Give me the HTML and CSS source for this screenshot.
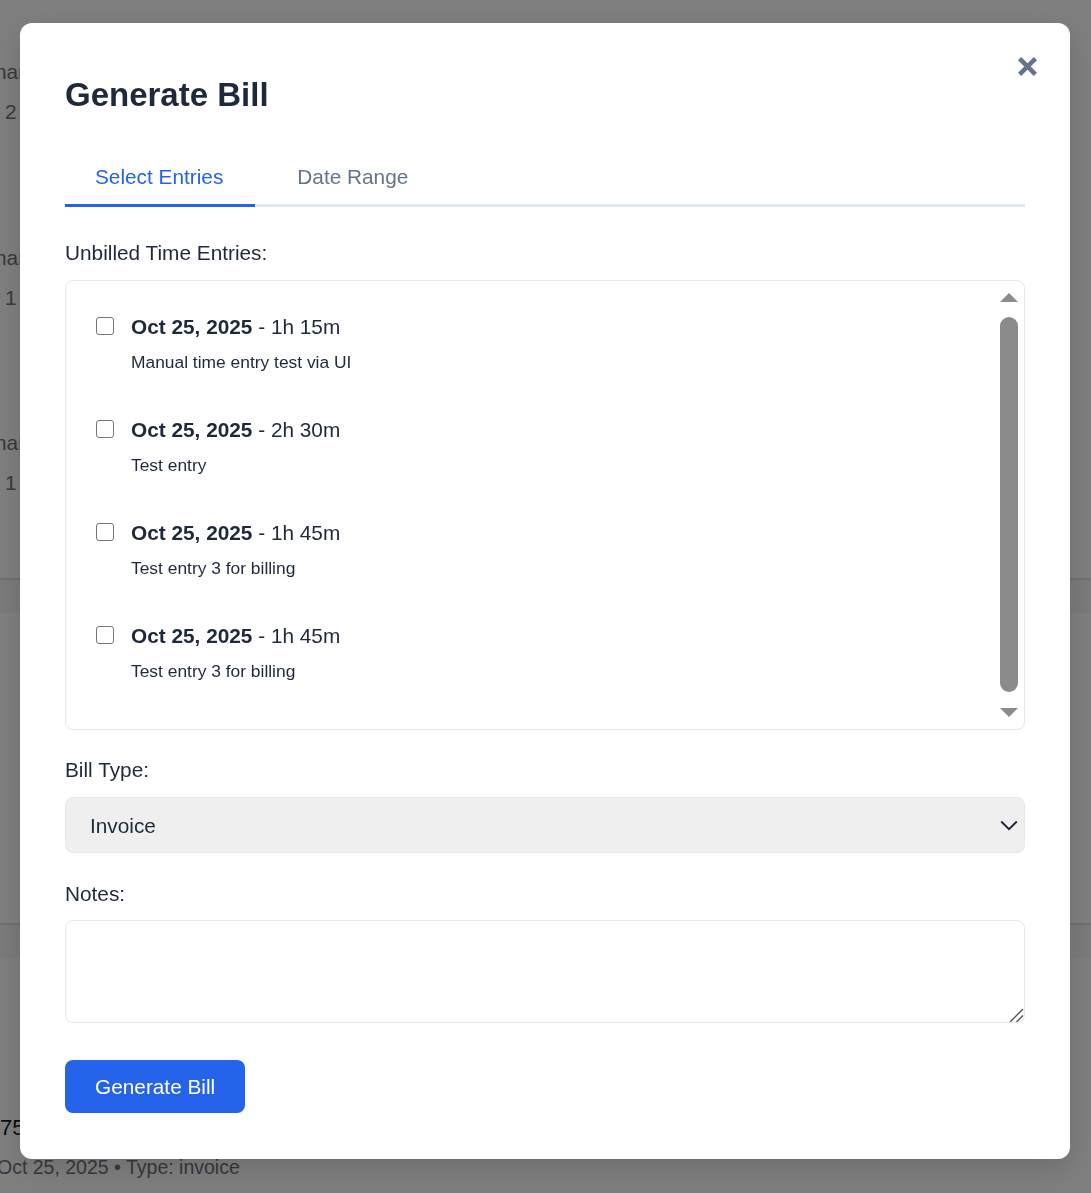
FILE: index.html
```html
<!DOCTYPE html>
<html lang="en">
<head>
<meta charset="utf-8">
<title>Generate Bill</title>
<link rel="stylesheet" href="styles.css">
</head>
<body>
<div class="page">
  <div class="bg-card"><div class="bg-label">nar</div><div class="bg-value">2</div></div>
  <div class="bg-card"><div class="bg-label">nar</div><div class="bg-value">1</div></div>
  <div class="bg-card bg-card-last"><div class="bg-label">nar</div><div class="bg-value">1</div></div>
  <div class="bg-band"></div>
  <div class="bg-gap"></div>
  <div class="bg-band"></div>
  <div class="bg-bill">
    <div class="bg-amount">75</div>
    <div class="bg-meta">Oct 25, 2025 • Type: invoice</div>
  </div>
</div>

<div class="overlay">
  <div class="modal">
    <button class="close" type="button" aria-label="Close">
      <svg width="21" height="21" viewBox="0 0 21 21"><path d="M2.6 2.6 L18.4 18.4 M18.4 2.6 L2.6 18.4" stroke="#64748b" stroke-width="4.5" fill="none"/></svg>
    </button>
    <h2 class="modal-title">Generate Bill</h2>
    <div class="tabs">
      <button class="tab active" type="button">Select Entries</button>
      <button class="tab" type="button">Date Range</button>
    </div>

    <div class="field field-entries">
      <div class="field-label">Unbilled Time Entries:</div>
      <div class="entries-box">
        <div class="entries-scroll">
          <div class="entries-list">
            <label class="entry">
              <input type="checkbox" class="entry-check">
              <span class="entry-text">
                <span class="entry-head"><strong>Oct 25, 2025</strong> - 1h 15m</span>
                <span class="entry-desc">Manual time entry test via UI</span>
              </span>
            </label>
            <label class="entry">
              <input type="checkbox" class="entry-check">
              <span class="entry-text">
                <span class="entry-head"><strong>Oct 25, 2025</strong> - 2h 30m</span>
                <span class="entry-desc">Test entry</span>
              </span>
            </label>
            <label class="entry">
              <input type="checkbox" class="entry-check">
              <span class="entry-text">
                <span class="entry-head"><strong>Oct 25, 2025</strong> - 1h 45m</span>
                <span class="entry-desc">Test entry 3 for billing</span>
              </span>
            </label>
            <label class="entry">
              <input type="checkbox" class="entry-check">
              <span class="entry-text">
                <span class="entry-head"><strong>Oct 25, 2025</strong> - 1h 45m</span>
                <span class="entry-desc">Test entry 3 for billing</span>
              </span>
            </label>
          </div>
        </div>
        <div class="scrollbar" aria-hidden="true">
          <div class="scroll-btn">
            <svg width="18" height="36" viewBox="0 0 18 36"><polygon points="9,12 18,21 0,21" fill="#8b8b8b"/></svg>
          </div>
          <div class="scroll-thumb"></div>
          <div class="scroll-btn">
            <svg width="18" height="36" viewBox="0 0 18 36"><polygon points="0,15 18,15 9,24" fill="#8b8b8b"/></svg>
          </div>
        </div>
      </div>
    </div>

    <div class="field field-type">
      <label class="field-label" for="billType">Bill Type:</label>
      <select id="billType" class="select">
        <option>Invoice</option>
        <option>Estimate</option>
      </select>
    </div>

    <div class="field field-notes">
      <label class="field-label" for="notes">Notes:</label>
      <textarea id="notes" class="textarea"></textarea>
    </div>

    <button class="primary" type="button">Generate Bill</button>
  </div>
</div>
</body>
</html>
```

FILE: styles.css
```css
* { box-sizing: border-box; }

html, body {
  margin: 0;
  padding: 0;
}

body {
  width: 1091px;
  height: 1193px;
  overflow: hidden;
  background: #ffffff;
  font-family: "Liberation Sans", Arial, sans-serif;
  color: #1e293b;
}

/* ---------- background page (behind the overlay) ---------- */
.page {
  padding-top: 60px;
  margin-left: -5px;
  font-size: 20.8px;
  line-height: 24px;
  color: #6b7280;
}

.bg-card { height: 185.5px; }
.bg-card-last { height: 147px; }

.bg-value {
  margin-top: 16px;
  padding-left: 10px;
}

.bg-band {
  height: 35px;
  border-top: 2px solid #dcdfe4;
  background: #f6f7f8;
}

.bg-gap { height: 310px; }

.bg-bill { padding-top: 156px; }

.bg-amount {
  padding-left: 5px;
  font-size: 22px;
  line-height: 28px;
  color: #111827;
}

.bg-meta {
  margin-top: 14px;
  padding-left: 2px;
  font-size: 19.5px;
  line-height: 22px;
  color: #6b7280;
}

/* ---------- overlay & modal ---------- */
.overlay {
  position: fixed;
  inset: 0;
  background: rgba(0, 0, 0, 0.5);
  padding: 23px 21px 0 20px;
}

.modal {
  position: relative;
  height: 1136px;
  background: #ffffff;
  border-radius: 12px;
  padding: 45px;
  box-shadow: 0 10px 30px rgba(0, 0, 0, 0.15);
}

.close {
  position: absolute;
  top: 33px;
  right: 32px;
  width: 21px;
  height: 21px;
  padding: 0;
  border: none;
  background: none;
  cursor: pointer;
}

.close svg { display: block; }

.modal-title {
  margin: 7px 0 0;
  font-size: 33px;
  line-height: 40px;
  font-weight: 700;
  color: #1e293b;
}

/* ---------- tabs ---------- */
.tabs {
  display: flex;
  margin-top: 38px;
  border-bottom: 3px solid #e2e8f0;
}

.tab {
  margin: 0 12px -3px 0;
  padding: 12px 32px 15px 30px;
  border: none;
  border-bottom: 3px solid transparent;
  background: none;
  font-family: inherit;
  font-size: 20.8px;
  line-height: 24px;
  color: #64748b;
  cursor: pointer;
}

.tab.active {
  color: #2563eb;
  border-bottom-color: #2563eb;
}

/* ---------- fields ---------- */
.field-label {
  display: block;
  margin-bottom: 15px;
  font-size: 20.8px;
  line-height: 24px;
  color: #1e293b;
}

.field-entries { margin-top: 34px; }
.field-type { margin-top: 28px; }
.field-notes { margin-top: 29px; }
.field-notes .field-label { margin-bottom: 14px; }

/* entries list */
.entries-box {
  display: flex;
  border: 1px solid #e2e8f0;
  border-radius: 8px;
  padding-right: 6px;
}

.entries-scroll {
  flex: 1;
  height: 448px;
  overflow-y: auto;
  scrollbar-width: none;
}

.entries-list {
  padding: 11px 0 27px;
}

.scrollbar {
  display: flex;
  flex-direction: column;
  flex-shrink: 0;
  width: 18px;
  height: 448px;
}

.scroll-btn {
  height: 36px;
  flex-shrink: 0;
}

.scroll-btn svg { display: block; }

.scroll-thumb {
  height: 375px;
  margin-bottom: 1px;
  border-radius: 9px;
  background: #8b8b8b;
}

.entry {
  display: flex;
  align-items: flex-start;
  gap: 17px;
  padding: 23px 30px;
  cursor: pointer;
}

.entry-check {
  appearance: none;
  -webkit-appearance: none;
  flex-shrink: 0;
  width: 18px;
  height: 18px;
  margin: 2px 0 0;
  border: 1.5px solid #767676;
  border-radius: 3px;
  background: #ffffff;
}

.entry-text { display: block; }

.entry-head {
  display: block;
  font-size: 20.8px;
  line-height: 24px;
  color: #1e293b;
}

.entry-head strong { font-weight: 700; }

.entry-desc {
  display: block;
  margin-top: 13px;
  font-size: 17.4px;
  line-height: 20px;
  color: #1e293b;
}

/* select */
.select {
  appearance: none;
  -webkit-appearance: none;
  display: block;
  width: 100%;
  height: 56px;
  padding: 0 24px;
  border: 1px solid #e2e8f0;
  border-radius: 8px;
  background-color: #efefef;
  background-image: url("data:image/svg+xml,%3Csvg xmlns='http://www.w3.org/2000/svg' width='18' height='11'%3E%3Cpolyline points='1.2,1.5 9,9.2 16.8,1.5' fill='none' stroke='%231e293b' stroke-width='2'/%3E%3C/svg%3E");
  background-repeat: no-repeat;
  background-position: right 6px center;
  font-family: inherit;
  font-size: 20.8px;
  color: #1e293b;
}

/* textarea */
.textarea {
  display: block;
  width: 100%;
  height: 103px;
  padding: 12px;
  border: 1px solid #e2e8f0;
  border-radius: 8px;
  resize: vertical;
  font-family: inherit;
  font-size: 20.8px;
  color: #1e293b;
}

.textarea::-webkit-scrollbar {
  width: 17px;
  height: 17px;
}

.textarea::-webkit-resizer {
  background-color: transparent;
  background-image: url("data:image/svg+xml,%3Csvg xmlns='http://www.w3.org/2000/svg' width='17' height='17'%3E%3Cpath d='M1 15 L14 2 M7.5 15 L14 8.5' stroke='%23555555' stroke-width='1.4' fill='none'/%3E%3C/svg%3E");
  background-repeat: no-repeat;
}

/* primary button */
.primary {
  display: block;
  margin-top: 37px;
  height: 53px;
  padding: 0 30px;
  border: none;
  border-radius: 8px;
  background: #2563eb;
  color: #ffffff;
  font-family: inherit;
  font-size: 20.8px;
  cursor: pointer;
}
```
